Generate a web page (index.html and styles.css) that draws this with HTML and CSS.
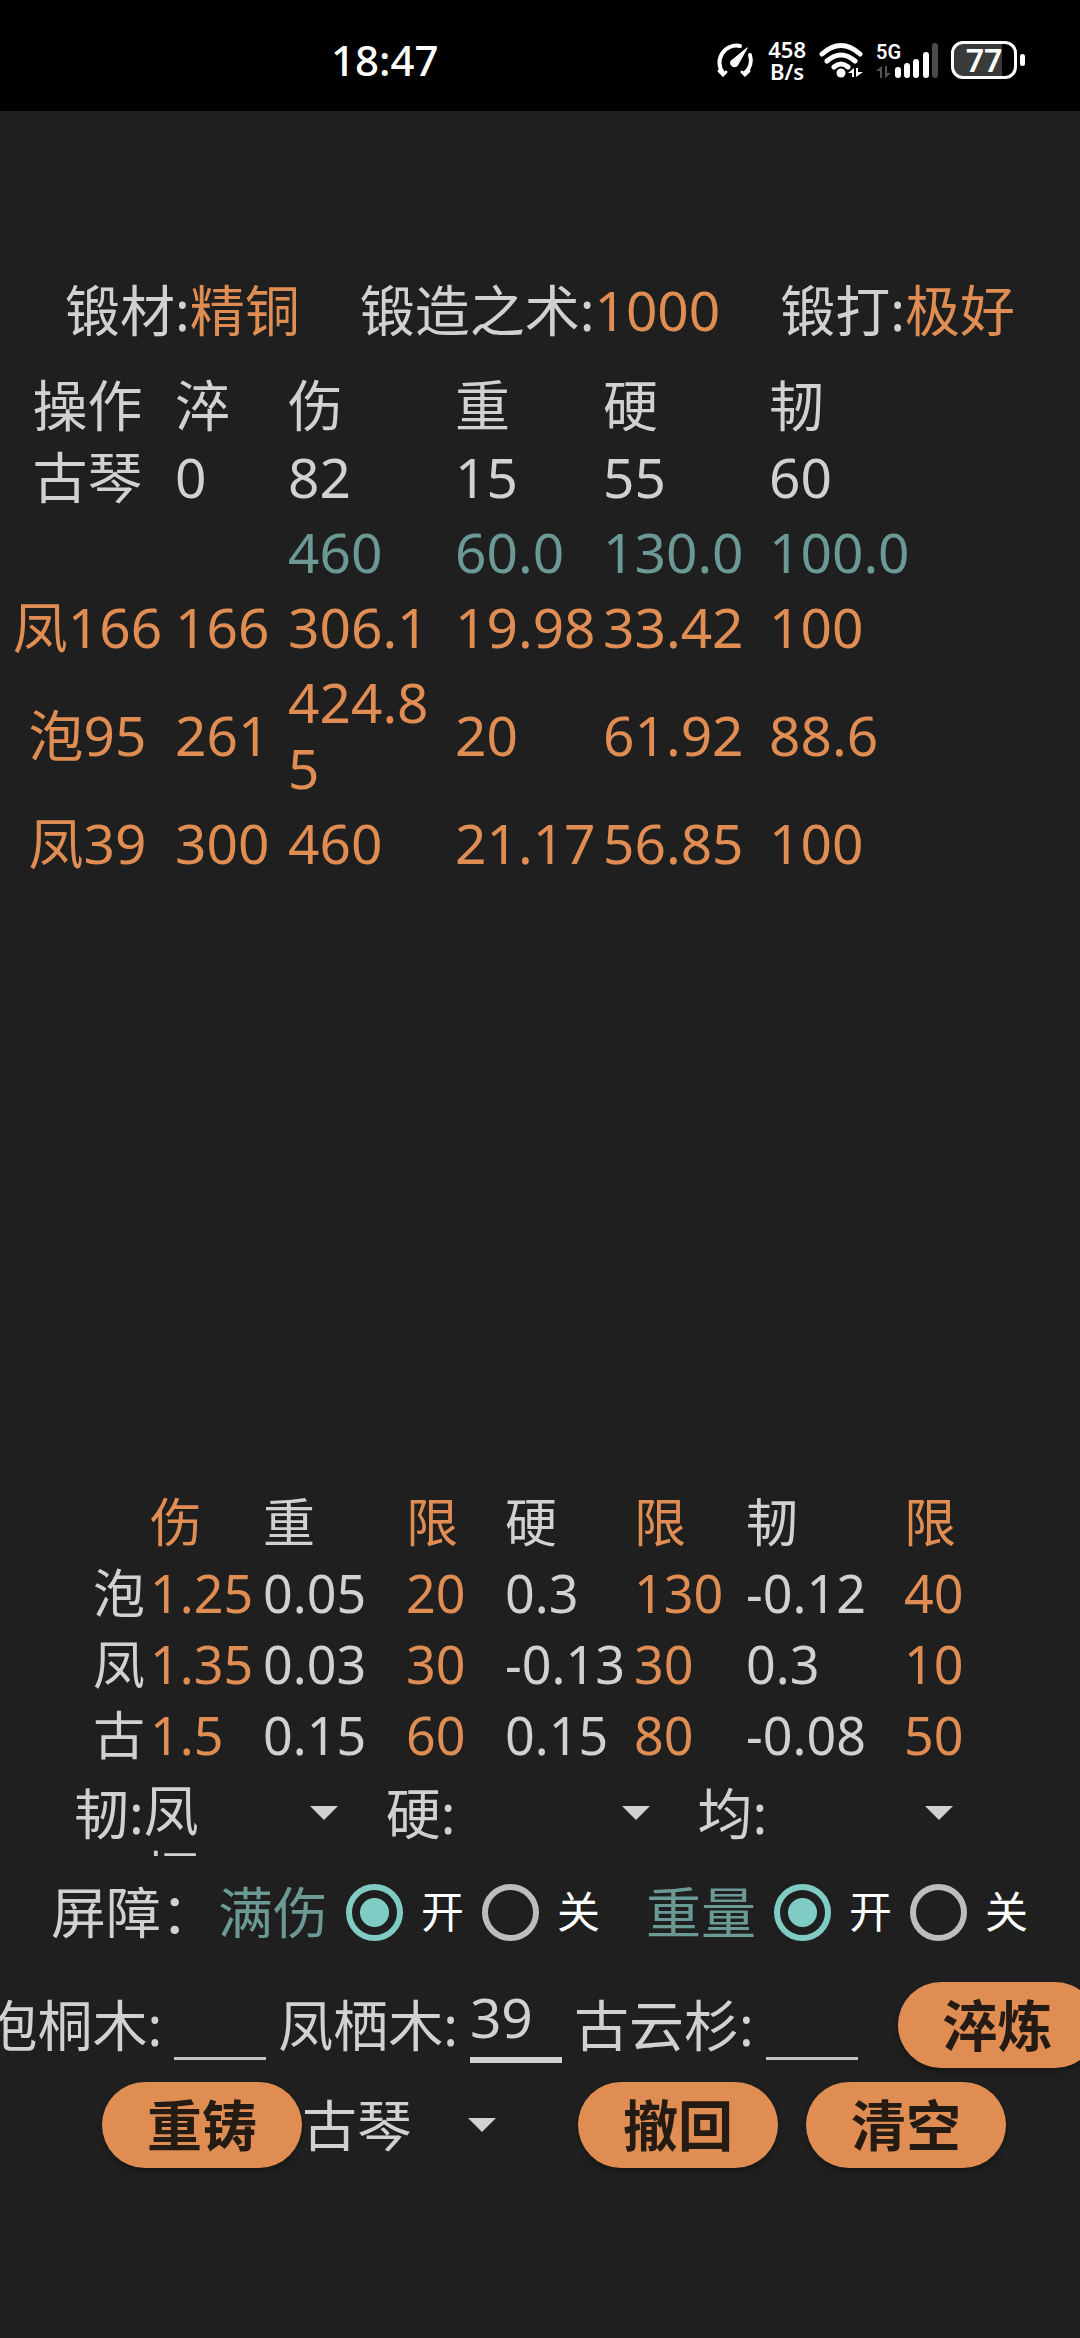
FILE: index.html
```html
<!DOCTYPE html>
<html lang="zh-CN">
<head>
  <meta charset="UTF-8">
  <meta name="viewport" content="width=device-width">
  <title>锻造</title>
  <link rel="stylesheet" href="styles.css">
</head>
<body>
  <header class="status-bar">
    <time class="clock">18:47</time>
    <div class="status-icons">
      <svg class="gauge" width="41" height="36" viewBox="0 0 41 36" fill="none" stroke="#fff" stroke-linecap="round">
        <path d="M9 31A17 17 0 0 1 26 4" stroke-width="4"/>
        <path d="M36 13A17 17 0 0 1 31 31" stroke-width="4"/>
        <path d="M5 29l4 4 3-3M35 29l-4 4-3-3" stroke-width="3"/>
        <path d="M33 6L17 19a4 4 0 0 0 6 5z" fill="#fff" stroke-width="1"/>
      </svg>
      <div class="net-speed"><span>458</span><span>B/s</span></div>
      <svg class="wifi" width="44" height="36" viewBox="0 0 44 36" fill="none" stroke="#fff" stroke-width="5" stroke-linecap="round">
        <path d="M3 12Q22-5 41 12M8 19Q22 7 36 19M15 25Q22 19 29 25"/>
        <circle cx="22" cy="31" r="4.5" fill="#fff" stroke="none"/>
        <path d="M35 26v9h-2v-4h-4zM37 35v-9h2v4h5z" fill="#fff" stroke="none"/>
      </svg>
      <div class="cell">
        <span class="cell-text">5G</span>
        <svg width="62" height="36" viewBox="0 0 62 36">
          <path d="M6 24v12H4v-7H0zM9 36V24h2v7h4z" fill="#555"/>
          <g stroke-width="6" stroke-linecap="round" stroke="#fff">
            <path d="M22 28v5M31 24v9M40 20v13M50 13v20"/>
            <path d="M59 4v29" stroke="#4a4a4a"/>
          </g>
        </svg>
      </div>
      <span class="battery"><span class="battery-level">77</span></span>
    </div>
  </header>

  <main>
    <section class="summary">
      <span>锻材:<b>精铜</b></span>
      <span>锻造之术:<b>1000</b></span>
      <span>锻打:<b>极好</b></span>
    </section>

    <section class="log">
      <table class="steps">
        <colgroup>
          <col class="step-name"><col class="step-temper"><col class="step-damage">
          <col class="step-weight"><col class="step-hard"><col>
        </colgroup>
        <thead>
          <tr><th>操作</th><th>淬</th><th>伤</th><th>重</th><th>硬</th><th>韧</th></tr>
        </thead>
        <tbody>
          <tr><td>古琴</td><td>0</td><td>82</td><td>15</td><td>55</td><td>60</td></tr>
          <tr class="limit"><td></td><td></td><td>460</td><td>60.0</td><td>130.0</td><td>100.0</td></tr>
          <tr class="done"><td>凤166</td><td>166</td><td>306.1</td><td>19.98</td><td>33.42</td><td>100</td></tr>
          <tr class="done"><td>泡95</td><td>261</td><td>424.85</td><td>20</td><td>61.92</td><td>88.6</td></tr>
          <tr class="done"><td>凤39</td><td>300</td><td>460</td><td>21.17</td><td>56.85</td><td>100</td></tr>
        </tbody>
      </table>
    </section>

    <table class="woods">
      <colgroup>
        <col class="wood-name"><col class="wood-damage"><col class="wood-weight"><col class="wood-weight-max">
        <col class="wood-hard"><col class="wood-hard-max"><col class="wood-tough"><col>
      </colgroup>
      <thead>
        <tr><th></th><th class="hot">伤</th><th>重</th><th class="hot">限</th><th>硬</th><th class="hot">限</th><th>韧</th><th class="hot">限</th></tr>
      </thead>
      <tbody>
        <tr><th>泡</th><td class="hot">1.25</td><td>0.05</td><td class="hot">20</td><td>0.3</td><td class="hot">130</td><td>-0.12</td><td class="hot">40</td></tr>
        <tr><th>凤</th><td class="hot">1.35</td><td>0.03</td><td class="hot">30</td><td>-0.13</td><td class="hot">30</td><td>0.3</td><td class="hot">10</td></tr>
        <tr><th>古</th><td class="hot">1.5</td><td>0.15</td><td class="hot">60</td><td>0.15</td><td class="hot">80</td><td>-0.08</td><td class="hot">50</td></tr>
      </tbody>
    </table>

    <form class="controls">
      <div class="picks">
        <label for="tough">韧:</label>
        <select id="tough"><option>凤栖木</option></select>
        <label for="hard">硬:</label>
        <select id="hard"><option></option></select>
        <label for="even">均:</label>
        <select id="even"><option></option></select>
      </div>

      <div class="barriers">
        <span>屏障：</span>
        <fieldset>
          <legend>满伤</legend>
          <input type="radio" name="damage" id="damageOn" checked><label for="damageOn">开</label>
          <input type="radio" name="damage" id="damageOff"><label for="damageOff">关</label>
        </fieldset>
        <fieldset>
          <legend>重量</legend>
          <input type="radio" name="weight" id="weightOn" checked><label for="weightOn">开</label>
          <input type="radio" name="weight" id="weightOff"><label for="weightOff">关</label>
        </fieldset>
      </div>

      <div class="amounts">
        <label for="pao">泡桐木:</label>
        <input type="text" id="pao" inputmode="numeric">
        <label for="feng">凤栖木:</label>
        <input type="text" id="feng" class="active" inputmode="numeric" value="39">
        <label for="gu">古云杉:</label>
        <input type="text" id="gu" inputmode="numeric">
        <button type="button" class="temper">淬炼</button>
      </div>

      <div class="actions">
        <div class="recast">
          <button type="button">重铸</button>
          <select id="item" aria-label="器物"><option>古琴</option></select>
        </div>
        <div class="history">
          <button type="button">撤回</button>
          <button type="button">清空</button>
        </div>
      </div>
    </form>
  </main>
</body>
</html>
```
FILE: styles.css
```css
* {
  box-sizing: border-box;
}

body {
  display: flex;
  flex-direction: column;
  min-height: 100vh;
  margin: 0;
  overflow-x: hidden;
  background-color: #1f1f1f;
  color: #d1d1d1;
  font-family: "Noto Sans", "Noto Sans CJK SC", sans-serif;
  font-size: 55px;
  line-height: 66px;
}

/* status bar */
.status-bar {
  display: flex;
  justify-content: space-between;
  align-items: center;
  height: 111px;
  padding: 8px 55px 0 331px;
  background-color: #000;
  color: #fff;
}

.clock {
  font-size: 42px;
  font-weight: 500;
}

.status-icons {
  display: flex;
  align-items: center;
  gap: 13px;
}

.net-speed {
  display: flex;
  flex-direction: column;
  font-size: 22px;
  font-weight: 600;
  line-height: 22px;
  text-align: center;
}

/* 5G label sits over the short bars */
.cell {
  position: relative;
  display: flex;
}

.cell-text {
  position: absolute;
  top: 0;
  left: 0;
  font-family: Roboto, sans-serif;
  font-size: 20px;
  font-weight: 600;
  line-height: 20px;
}

.battery {
  display: flex;
  align-items: center;
}

.battery::after {
  content: "";
  width: 5px;
  height: 12px;
  margin-left: 3px;
  border-radius: 3px;
  background-color: #fff;
}

.battery-level {
  width: 66px;
  height: 38px;
  border: 3px solid #fff;
  border-radius: 12px;
  background: linear-gradient(90deg, #3a3a3a 80%, #000 80%);
  font-size: 32px;
  font-weight: 600;
  line-height: 32px;
  text-align: center;
}

/* page */
main {
  display: flex;
  flex-direction: column;
  flex: 1;
  padding: 166px 0 170px;
}

.summary {
  display: flex;
  justify-content: center;
  gap: 60px;
  margin-bottom: 26px;
  white-space: nowrap;
}

.summary b {
  color: #e08d53;
  font-weight: normal;
}

.log {
  flex: 1;
}

table {
  width: 100%;
  table-layout: fixed;
  border-collapse: collapse;
}

th,
td {
  padding: 0;
  font-weight: normal;
  text-align: left;
}

.hot,
.done {
  color: #e08d53;
}

.limit {
  color: #6b9a96;
}

.steps th {
  padding: 3px 0 2px;
}

.steps td {
  padding: 4px 0 5px;
  word-break: break-all;
}

.steps th:first-child,
.steps td:first-child {
  text-align: center;
}

.step-name { width: 175px; }
.step-temper { width: 113px; }
.step-damage { width: 167px; }
.step-weight { width: 148px; }
.step-hard { width: 166px; }

.woods {
  font-size: 52px;
  line-height: 71px;
}

.woods th:first-child {
  padding-left: 93px;
}

.wood-name { width: 150px; }
.wood-damage { width: 113px; }
.wood-weight { width: 143px; }
.wood-weight-max { width: 99px; }
.wood-hard { width: 129px; }
.wood-hard-max { width: 112px; }
.wood-tough { width: 158px; }

/* controls */
select,
input,
button {
  margin: 0;
  border: 0;
  font: inherit;
  color: inherit;
}

select {
  appearance: none;
  width: 210px;
  height: 86px;
  padding: 7px 110px 0 0;
  background: url("data:image/svg+xml,%3Csvg xmlns='http://www.w3.org/2000/svg' viewBox='0 0 28 14'%3E%3Cpath d='M0 0h28L14 14z' fill='%23d1d1d1'/%3E%3C/svg%3E") right 16px center / 28px 14px no-repeat;
  overflow: hidden;
  white-space: normal;
  word-break: break-all;
}

.picks {
  display: flex;
  align-items: center;
  padding-left: 74px;
}

.picks select {
  margin-right: 32px;
}

.picks select:last-child {
  width: 202px;
}

.barriers {
  display: flex;
  align-items: center;
  gap: 46px;
  height: 112px;
  padding-left: 51px;
}

.barriers > span {
  margin-right: -44px;
}

fieldset {
  display: flex;
  align-items: center;
  gap: 18px;
  margin: 0;
  padding: 0;
  border: 0;
}

legend {
  float: left;
  padding: 0;
  color: #6b9a96;
}

fieldset label {
  color: #fff;
  font-size: 43px;
}

input[type="radio"] {
  appearance: none;
  width: 57px;
  height: 57px;
  border: 6px solid #bdbdbd;
  border-radius: 50%;
}

input[type="radio"]:checked {
  border-color: #80cbc4;
  background: radial-gradient(circle, #80cbc4 14px, transparent 15px);
}

.amounts {
  display: flex;
  justify-content: center;
  align-items: center;
  margin: 14px 0;
  white-space: nowrap;
}

.amounts > * {
  flex-shrink: 0;
}

input[type="text"] {
  width: 92px;
  height: 70px;
  margin: 0 12px;
  padding: 0 0 14px;
  border-bottom: 3px solid #c4c4c4;
  background: none;
  outline: none;
}

input.active {
  box-shadow: 0 3px #d1d1d1;
  border-color: #d1d1d1;
}

button {
  width: 200px;
  height: 86px;
  border-radius: 43px;
  background-color: #e08d53;
  box-shadow: 0 3px 5px rgba(0, 0, 0, 0.3);
  color: #241c14;
  font-weight: bold;
  text-align: center;
}

.temper {
  margin-left: 28px;
}

.actions {
  display: flex;
  justify-content: space-between;
  padding: 0 74px 0 102px;
}

.recast,
.history {
  display: flex;
}

.history {
  gap: 28px;
}

.recast select {
  padding: 0 50px 0 0;
}
```
